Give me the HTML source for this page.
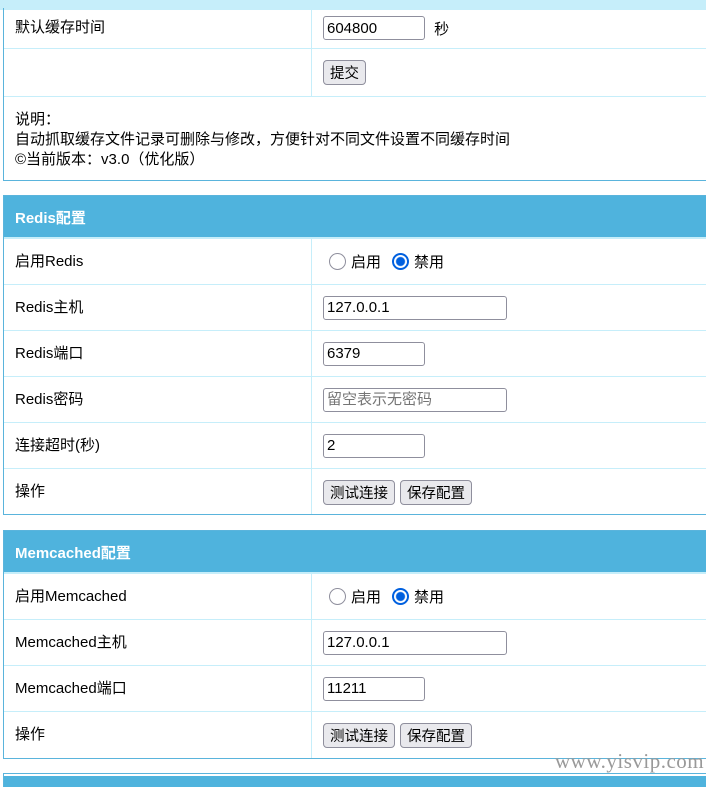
<!DOCTYPE html>
<html style="overflow:hidden;height:787px"><head><meta charset="utf-8"><style>
body{margin:0;width:706px;height:787px;overflow:hidden;background:#fff;font-family:"Liberation Sans","Noto Sans CJK SC",sans-serif;font-size:15px;color:#000;position:relative}
.tb{position:absolute;left:3px;width:720px;border:1px solid #5ab4dc;box-sizing:border-box;overflow:hidden}
.hd{height:43px;background:#4fb3dd;color:#fff;font-weight:bold;font-size:15px;line-height:45px;padding-left:11px;border-bottom:2px solid #c6eefa;box-sizing:border-box}
.r{height:46px;border-bottom:1px solid #c6eefa;display:flex;box-sizing:border-box}
.r:last-child{border-bottom:none}
.l{width:308px;border-right:1px solid #c6eefa;padding-left:11px;line-height:46px;box-sizing:border-box}
.v{padding-left:11px;display:flex;align-items:center;gap:5px}
input[type=text]{font:15px "Liberation Sans","Noto Sans CJK SC",sans-serif;height:24px;box-sizing:border-box;border:1px solid #8f8f9d;border-radius:3px;padding:0 3px;margin:0}
button{font:14.5px "Liberation Sans","Noto Sans CJK SC",sans-serif;height:25px;border:1px solid #8f8f9d;border-radius:4px;background:#e9e9ed;padding:0 6px;margin:0}
.rad{width:17px;height:17px;border-radius:50%;border:1px solid #8f8f9d;box-sizing:border-box;display:inline-block;margin-left:6px}
.rad.on{border:2px solid #0060df;background:radial-gradient(#0060df 4px,#fff 5px)}
</style></head><body>
<div style="position:absolute;left:0;top:0;width:706px;height:10px;background:#c6eefa"></div>
<div class="tb" style="top:8px;height:173px;border-top:none">
 <div class="r" style="height:41px"><div class="l" style="line-height:40px">默认缓存时间</div><div class="v"><input type="text" value="604800" style="width:102px"> &nbsp;秒</div></div>
 <div class="r" style="height:48px;border-bottom:1px solid #c6eefa"><div class="l"></div><div class="v"><button>提交</button></div></div>
 <div style="padding:13px 0 0 11px;line-height:20px">说明：<br>自动抓取缓存文件记录可删除与修改，方便针对不同文件设置不同缓存时间<br>©当前版本：v3.0（优化版）</div>
</div>
<div class="tb" style="top:195px;height:320px">
 <div class="hd">Redis配置</div>
 <div class="r"><div class="l">启用Redis</div><div class="v"><span class="rad"></span>启用<span class="rad on"></span>禁用</div></div>
 <div class="r"><div class="l">Redis主机</div><div class="v"><input type="text" value="127.0.0.1" style="width:184px"></div></div>
 <div class="r"><div class="l">Redis端口</div><div class="v"><input type="text" value="6379" style="width:102px"></div></div>
 <div class="r"><div class="l">Redis密码</div><div class="v"><input type="text" placeholder="留空表示无密码" style="width:184px"></div></div>
 <div class="r"><div class="l">连接超时(秒)</div><div class="v"><input type="text" value="2" style="width:102px"></div></div>
 <div class="r"><div class="l">操作</div><div class="v"><button>测试连接</button><button>保存配置</button></div></div>
</div>
<div class="tb" style="top:530px;height:229px">
 <div class="hd">Memcached配置</div>
 <div class="r"><div class="l">启用Memcached</div><div class="v"><span class="rad"></span>启用<span class="rad on"></span>禁用</div></div>
 <div class="r"><div class="l">Memcached主机</div><div class="v"><input type="text" value="127.0.0.1" style="width:184px"></div></div>
 <div class="r"><div class="l">Memcached端口</div><div class="v"><input type="text" value="11211" style="width:102px"></div></div>
 <div class="r"><div class="l">操作</div><div class="v"><button>测试连接</button><button>保存配置</button></div></div>
</div>
<div class="tb" style="top:773px;height:14px;border-bottom:none"><div style="margin-top:2px;height:20px;background:#4fb3dd"></div></div>
<div style="position:absolute;left:555px;top:749px;font-family:'Liberation Serif',serif;font-size:21px;color:#999;letter-spacing:0.5px">www.yisvip.com</div>
</body></html>
